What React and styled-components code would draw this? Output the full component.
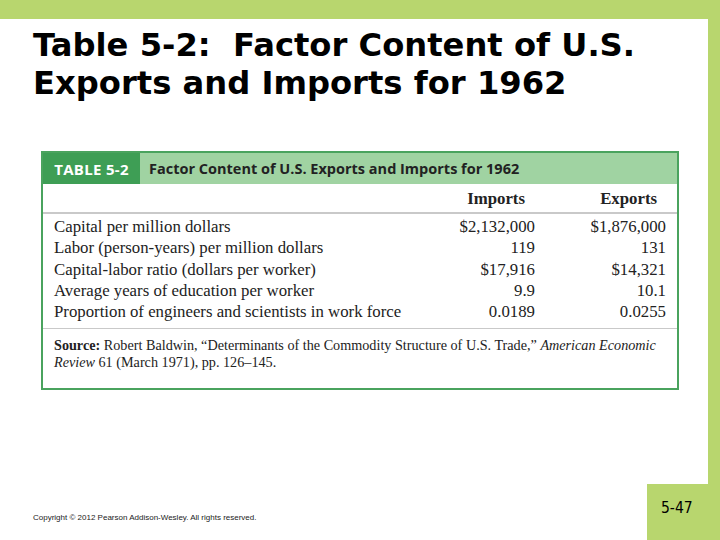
import React from "react";
import styled, { createGlobalStyle } from "styled-components";

const Global = createGlobalStyle`
  * { margin: 0; padding: 0; box-sizing: border-box; }
  body { background: #fff; overflow: hidden; }
`;

const Slide = styled.div`
  width: 720px;
  height: 540px;
  display: grid;
  grid-template-columns: 1fr 12px;
  grid-template-rows: 19px 1fr;
  background: #fff;
`;

const TopBar = styled.div`
  grid-column: 1 / 3;
  background: #b8d66e;
`;

const Body = styled.div`
  display: flex;
  flex-direction: column;
  padding: 7px 0 0 33px;
`;

const SideBar = styled.div`
  background: #b8d66e;
`;

const Title = styled.h1`
  font-family: "DejaVu Sans", Verdana, sans-serif;
  font-weight: bold;
  font-size: 32.2px;
  line-height: 38px;
  color: #000;
  white-space: nowrap;
`;

const TableBox = styled.div`
  margin: 49px 0 0 8px;
  width: 638px;
  border: 2px solid #4aa35e;
  display: flex;
  flex-direction: column;
`;

const Head = styled.div`
  display: flex;
  height: 31px;
  font-family: "Open Sans", "Noto Sans", sans-serif;
  font-weight: bold;
  font-size: 14.5px;
`;

const Tag = styled.div`
  background: #3e9e55;
  color: #fff;
  width: 97px;
  display: flex;
  align-items: center;
  justify-content: center;
  font-size: 15px;
  letter-spacing: 0.3px;
`;

const HeadTitle = styled.div`
  flex: 1;
  background: #a0d3a2;
  color: #222;
  display: flex;
  align-items: center;
  padding-left: 9px;
`;

const Grid = styled.div`
  display: grid;
  grid-template-columns: 1fr 130px 131px;
  font-family: "Liberation Serif", "Times New Roman", serif;
  font-size: 16.8px;
  color: #222;
  padding: 0 11px;
`;

const HeaderRow = styled(Grid)`
  height: 30px;
  border-bottom: 2px solid #c9c9c9;
`;

const ColHead = styled.div`
  font-weight: bold;
  text-align: right;
  padding-right: ${(p) => p.$pad || 0}px;
  line-height: 30px;
`;

const Rows = styled(Grid)`
  padding-top: 2px;
  padding-bottom: 6px;
  border-bottom: 1px solid #c9c9c9;
`;

const Cell = styled.div`
  text-align: ${(p) => (p.$num ? "right" : "left")};
  line-height: 21.3px;
  white-space: nowrap;
`;

const Source = styled.p`
  font-family: "Liberation Serif", "Times New Roman", serif;
  font-size: 14.2px;
  line-height: 16.5px;
  color: #222;
  padding: 8px 11px 18px 11px;
`;

const Footer = styled.div`
  margin-top: auto;
  display: flex;
  align-items: flex-end;
  justify-content: space-between;
`;

const Copy = styled.div`
  font-family: "Liberation Sans", Arial, sans-serif;
  font-size: 8px;
  color: #222;
  margin: 0 0 18px 0;
`;

const PageNum = styled.div`
  width: 61px;
  height: 56px;
  background: #b8d66e;
  font-family: "DejaVu Sans Condensed", "DejaVu Sans", sans-serif;
  font-size: 15.5px;
  color: #000;
  padding: 15px 0 0 14px;
`;

const rows = [
  ["Capital per million dollars", "$2,132,000", "$1,876,000"],
  ["Labor (person-years) per million dollars", "119", "131"],
  ["Capital-labor ratio (dollars per worker)", "$17,916", "$14,321"],
  ["Average years of education per worker", "9.9", "10.1"],
  ["Proportion of engineers and scientists in work force", "0.0189", "0.0255"],
];

export default function App() {
  return (
    <>
      <Global />
      <Slide>
        <TopBar />
        <Body>
          <Title>
            Table 5-2:&nbsp; Factor Content of U.S.
            <br />
            Exports and Imports for 1962
          </Title>
          <TableBox>
            <Head>
              <Tag>TABLE 5-2</Tag>
              <HeadTitle>Factor Content of U.S. Exports and Imports for 1962</HeadTitle>
            </Head>
            <HeaderRow>
              <ColHead />
              <ColHead $pad={10}>Imports</ColHead>
              <ColHead $pad={9}>Exports</ColHead>
            </HeaderRow>
            <Rows>
              {rows.map(([label, imp, exp]) => (
                <React.Fragment key={label}>
                  <Cell>{label}</Cell>
                  <Cell $num>{imp}</Cell>
                  <Cell $num>{exp}</Cell>
                </React.Fragment>
              ))}
            </Rows>
            <Source>
              <b>Source:</b> Robert Baldwin, “Determinants of the Commodity Structure of U.S. Trade,”{" "}
              <i>American Economic Review</i> 61 (March 1971), pp. 126–145.
            </Source>
          </TableBox>
          <Footer>
            <Copy>Copyright © 2012 Pearson Addison-Wesley. All rights reserved.</Copy>
            <PageNum>5-47</PageNum>
          </Footer>
        </Body>
        <SideBar />
      </Slide>
    </>
  );
}
